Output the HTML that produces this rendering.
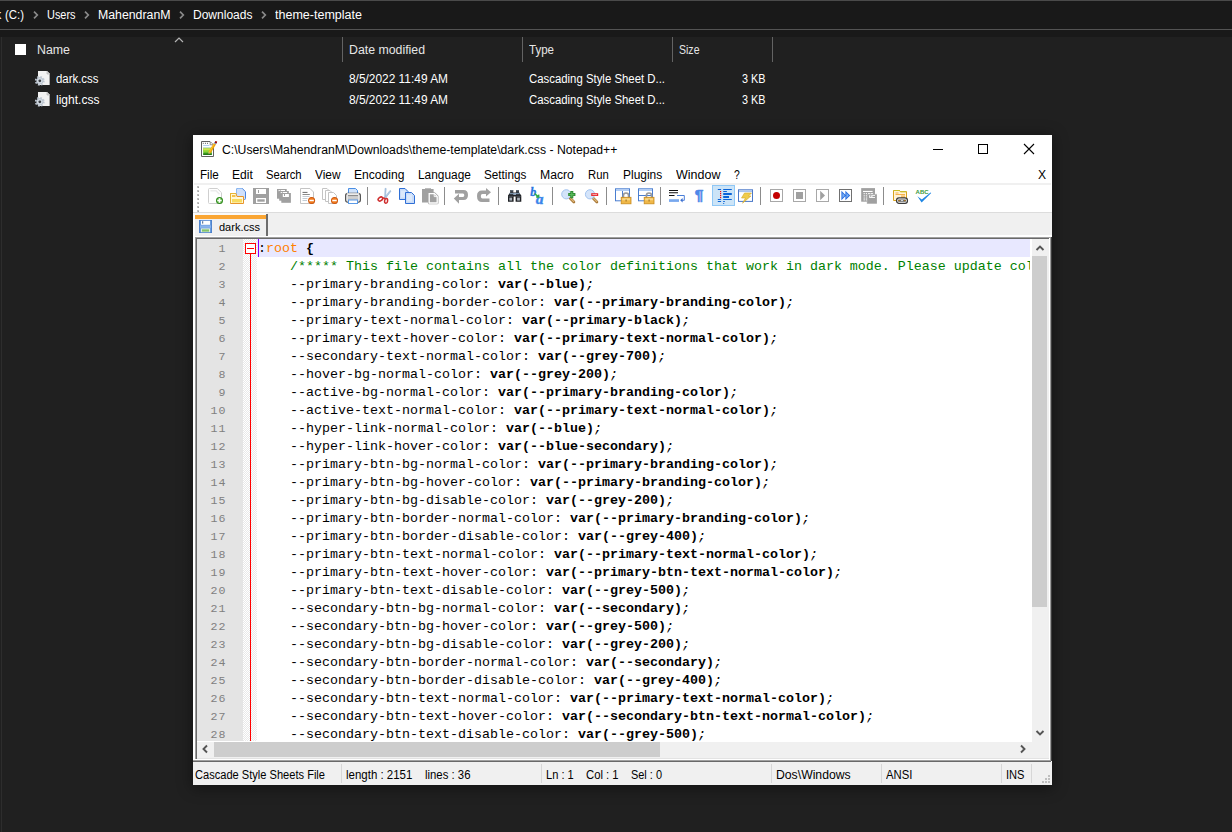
<!DOCTYPE html>
<html lang="en"><head><meta charset="utf-8"><title>dark.css - Notepad++</title>
<style>
html,body{margin:0;padding:0}
body{width:1232px;height:832px;background:#202020;position:relative;overflow:hidden;font-family:"Liberation Sans",sans-serif}
.a{position:absolute}
.t{position:absolute;white-space:pre;line-height:1;transform-origin:0 0}
svg{position:absolute;overflow:visible}
#win{position:absolute;left:193px;top:135px;width:859px;height:650px;background:#fff;box-shadow:0 2px 14px 1px rgba(0,0,0,.42)}
#ed{position:absolute;left:4px;top:104px;width:835px;height:503px;overflow:hidden;background:#fff;font-family:"Liberation Mono",monospace;font-size:13.333px}
#nummargin{position:absolute;left:0;top:0;width:46px;height:503px;background:#e4e4e4}
#foldmargin{position:absolute;left:46px;top:0;width:14px;height:503px;background-color:#fff;background-image:linear-gradient(45deg,#e9e9e9 25%,transparent 25%,transparent 75%,#e9e9e9 75%),linear-gradient(45deg,#e9e9e9 25%,transparent 25%,transparent 75%,#e9e9e9 75%);background-size:2px 2px;background-position:0 0,1px 1px}
#curline{position:absolute;left:60px;top:0;width:773px;height:18px;background:#e8e8ff}
#caret{position:absolute;left:61px;top:0;width:1px;height:18px;background:#8000ff}
.ln{position:absolute;left:0;width:1200px;height:18px;line-height:18px;white-space:pre;color:#000}
.n{position:absolute;top:1px;left:0;width:29.5px;text-align:right;color:#808080;font-size:11.6px;letter-spacing:1.04px}
.x{position:absolute;top:1px}
.x b{font-weight:bold}
.x i{font-style:italic;font-weight:normal}
.c{color:#008000}
.o{color:#ff8000}
.p{color:#000}
#tx{position:absolute;left:0;top:0;width:833px;height:503px;overflow:hidden}

</style></head><body>
<!-- Explorer -->
<div class="a" style="left:0;top:0;width:1232px;height:37px;background:#191919"></div>
<div class="a" style="left:0;top:0;width:1232px;height:1px;background:#4a4a4a"></div>
<div class="a" style="left:0;top:29px;width:1232px;height:1px;background:#535353"></div>
<div class="a" style="left:1px;top:37px;width:1px;height:795px;background:#2d2d2d"></div>
<svg style="left:32.7px;top:11.3px" width="6" height="8" viewBox="0 0 6 8"><path d="M1 0.7 L4.3 4 L1 7.3" fill="none" stroke="#8a8a8a" stroke-width="1.7"/></svg>
<svg style="left:83.7px;top:11.3px" width="6" height="8" viewBox="0 0 6 8"><path d="M1 0.7 L4.3 4 L1 7.3" fill="none" stroke="#8a8a8a" stroke-width="1.7"/></svg>
<svg style="left:178.7px;top:11.3px" width="6" height="8" viewBox="0 0 6 8"><path d="M1 0.7 L4.3 4 L1 7.3" fill="none" stroke="#8a8a8a" stroke-width="1.7"/></svg>
<svg style="left:260.7px;top:11.3px" width="6" height="8" viewBox="0 0 6 8"><path d="M1 0.7 L4.3 4 L1 7.3" fill="none" stroke="#8a8a8a" stroke-width="1.7"/></svg>
<div class="a" style="left:15px;top:44px;width:11px;height:11px;background:#fff;"></div>
<svg style="left:173.6px;top:36.5px" width="10" height="6" viewBox="0 0 10 6"><path d="M1 5 L5 1 L9 5" fill="none" stroke="#b4b4b4" stroke-width="1.2"/></svg>
<div class="a" style="left:342px;top:37px;width:1px;height:25px;background:#636363;"></div>
<div class="a" style="left:522px;top:37px;width:1px;height:25px;background:#636363;"></div>
<div class="a" style="left:672px;top:37px;width:1px;height:25px;background:#636363;"></div>
<div class="a" style="left:772px;top:37px;width:1px;height:25px;background:#636363;"></div>
<svg style="left:35px;top:70px" width="16" height="16" viewBox="0 0 16 16" ><path d="M3 1 H12 L15 4 V15 H3 Z" fill="#f2f2f2"/><path d="M14.5 4 V15" stroke="#a8a8a8" stroke-width="1"/><path d="M12 1 V4 H15" fill="#d8d8d8" stroke="#a8a8a8" stroke-width="0.6"/><circle cx="4.8" cy="10.8" r="4.1" fill="none" stroke="#c4ccd6" stroke-width="1.7" stroke-dasharray="1.7 1.52"/><circle cx="4.8" cy="10.8" r="3.3" fill="#d4dce4" stroke="#9aa6b4" stroke-width="0.5"/><circle cx="4.8" cy="10.8" r="1.4" fill="#3c4046"/></svg>
<svg style="left:35px;top:91px" width="16" height="16" viewBox="0 0 16 16" ><path d="M3 1 H12 L15 4 V15 H3 Z" fill="#f2f2f2"/><path d="M14.5 4 V15" stroke="#a8a8a8" stroke-width="1"/><path d="M12 1 V4 H15" fill="#d8d8d8" stroke="#a8a8a8" stroke-width="0.6"/><circle cx="4.8" cy="10.8" r="4.1" fill="none" stroke="#c4ccd6" stroke-width="1.7" stroke-dasharray="1.7 1.52"/><circle cx="4.8" cy="10.8" r="3.3" fill="#d4dce4" stroke="#9aa6b4" stroke-width="0.5"/><circle cx="4.8" cy="10.8" r="1.4" fill="#3c4046"/></svg>

<!-- Notepad++ window -->
<div id="win">
<svg style="left:8px;top:6px" width="16" height="16" viewBox="0 0 16 16" ><path d="M0.5 0.5 H9 L12.5 4 V15.5 H0.5 Z" fill="#fff" stroke="#606060"/><path d="M9.2 1 V3.8 H12" fill="#fff" stroke="#707070" stroke-width="0.8"/><path d="M1.8 2.4 H7.6" stroke="#707070" stroke-width="1.1" stroke-dasharray="0.9 1.25"/><path d="M2.2 4.5 H8.4" stroke="#a8c8ec" stroke-width="0.9"/><rect x="2.2" y="6.3" width="8.6" height="7.5" fill="#68c030"/><rect x="2.2" y="6.3" width="8.6" height="1" fill="#dce8f8"/><rect x="2.2" y="7.3" width="8.6" height="1.8" fill="#d0e44c"/><rect x="2.2" y="9.1" width="8.6" height="1.6" fill="#a0dc3c"/><rect x="2.2" y="12.5" width="8.6" height="1.3" fill="#0c6408"/><path d="M13.9 2.6 L8.6 11.6" stroke="#f0a008" stroke-width="2.5"/><path d="M13.4 2.6 L8.3 11.2" stroke="#fcc830" stroke-width="0.9"/><path d="M9.6 12.2 L7.4 13.2 L7.6 10.9 Z" fill="#e8c890"/><path d="M7.4 13.2 L8 12 L8.5 12.7 Z" fill="#4a3a1a"/><path d="M14.6 1.4 L13.7 2.9" stroke="#88a8d8" stroke-width="2.3"/><rect x="14" y="0.3" width="2" height="2" fill="#9c0808" transform="rotate(12 15 1.3)"/></svg>
<div class="a" style="left:740px;top:14px;width:10px;height:1px;background:#000;"></div>
<div class="a" style="left:785px;top:9px;width:8px;height:8px;border:1px solid #000"></div>
<svg style="left:831px;top:9px" width="10" height="10" viewBox="0 0 10 10"><path d="M0 0 L10 10 M10 0 L0 10" stroke="#000" stroke-width="1.1"/></svg>
<div class="a" style="left:1px;top:48px;width:857px;height:2px;background:#f0f0f0;"></div>
<div class="a" style="left:4px;top:51px;width:2px;height:2px;background:#c2c2c2;"></div><div class="a" style="left:5px;top:52px;width:1px;height:1px;background:#a2a2a2;"></div><div class="a" style="left:4px;top:55px;width:2px;height:2px;background:#c2c2c2;"></div><div class="a" style="left:5px;top:56px;width:1px;height:1px;background:#a2a2a2;"></div><div class="a" style="left:4px;top:59px;width:2px;height:2px;background:#c2c2c2;"></div><div class="a" style="left:5px;top:60px;width:1px;height:1px;background:#a2a2a2;"></div><div class="a" style="left:4px;top:63px;width:2px;height:2px;background:#c2c2c2;"></div><div class="a" style="left:5px;top:64px;width:1px;height:1px;background:#a2a2a2;"></div><div class="a" style="left:4px;top:67px;width:2px;height:2px;background:#c2c2c2;"></div><div class="a" style="left:5px;top:68px;width:1px;height:1px;background:#a2a2a2;"></div><div class="a" style="left:4px;top:71px;width:2px;height:2px;background:#c2c2c2;"></div><div class="a" style="left:5px;top:72px;width:1px;height:1px;background:#a2a2a2;"></div><div class="a" style="left:4px;top:75px;width:2px;height:2px;background:#c2c2c2;"></div><div class="a" style="left:5px;top:76px;width:1px;height:1px;background:#a2a2a2;"></div>
<div class="a" style="left:519px;top:50px;width:21px;height:19px;background:#cce4f7;border:1px solid #90c8f6"></div>
<div class="a" style="left:174px;top:52px;width:1px;height:18px;background:#8c8c8c"></div>
<div class="a" style="left:251px;top:52px;width:1px;height:18px;background:#8c8c8c"></div>
<div class="a" style="left:305px;top:52px;width:1px;height:18px;background:#8c8c8c"></div>
<div class="a" style="left:359px;top:52px;width:1px;height:18px;background:#8c8c8c"></div>
<div class="a" style="left:413px;top:52px;width:1px;height:18px;background:#8c8c8c"></div>
<div class="a" style="left:467px;top:52px;width:1px;height:18px;background:#8c8c8c"></div>
<div class="a" style="left:567px;top:52px;width:1px;height:18px;background:#8c8c8c"></div>
<div class="a" style="left:690px;top:52px;width:1px;height:18px;background:#8c8c8c"></div>
<svg style="left:14px;top:53px" width="16" height="16" viewBox="0 0 16 16" ><path d="M1.5 1.5 Q1.5 0.5 2.5 0.5 H10.3 L14.5 4.7 V14.5 Q14.5 15.5 13.5 15.5 H2.5 Q1.5 15.5 1.5 14.5 Z" fill="#fff" stroke="#cfcfcf"/><path d="M3.5 2.8 H9 L12.5 6.2" fill="none" stroke="#ececec" stroke-width="1.6"/><circle cx="12.5" cy="12.5" r="3.5" fill="#2f8a1d"/><circle cx="12.5" cy="12.5" r="2.6" fill="#56b03c"/><path d="M12.5 10.3 V14.7 M10.3 12.5 H14.7" stroke="#fff" stroke-width="1.7"/></svg>
<svg style="left:37px;top:53px" width="16" height="16" viewBox="0 0 16 16" ><path d="M6.5 1.5 Q6.5 0.5 7.5 0.5 H12.3 L15.5 3.7 V10.5 Q15.5 11.5 14.5 11.5 H6.5 Z" fill="#cfe0fb" stroke="#4a86e0"/><path d="M6.5 11 V1.5 Q6.5 0.5 7.5 0.5 H12" fill="none" stroke="#8fbaf2"/><path d="M0.5 5.5 H6 L7 8.5 H13.5 V15.5 H0.5 Z" fill="#fff8d8" stroke="#e8952a"/><path d="M0.5 15 V5.5 H6" fill="none" stroke="#e8b432"/><rect x="2" y="11" width="10" height="3.5" fill="#f8dc60"/><rect x="2" y="7" width="3.5" height="2" fill="#f4c24a"/></svg>
<svg style="left:60px;top:53px" width="16" height="16" viewBox="0 0 16 16" ><rect x="0" y="0" width="16" height="16" fill="#a0a0a0"/><rect x="3" y="1" width="10" height="5" fill="#fff"/><rect x="5" y="2" width="1" height="3" fill="#a0a0a0"/><rect x="3" y="10" width="10" height="5" fill="#fff"/><rect x="4.3" y="11.3" width="7.4" height="2.4" fill="#a0a0a0"/></svg>
<svg style="left:83px;top:53px" width="16" height="16" viewBox="0 0 16 16" ><rect x="1" y="1" width="9.7" height="9.7" fill="#a0a0a0"/><rect x="2.6" y="2" width="1.2" height="1.2" fill="#fff"/><rect x="4.6" y="2" width="4.4" height="1.2" fill="#fff"/><rect x="3.2" y="3" width="9.6" height="9.7" fill="#a0a0a0"/><rect x="4.7" y="4" width="1.2" height="1.2" fill="#fff"/><rect x="6.7" y="4" width="4.4" height="1.2" fill="#fff"/><rect x="5.3" y="5" width="9.6" height="9.8" fill="#a0a0a0"/><rect x="6.8" y="6" width="6.1" height="3" fill="#fff"/><rect x="8" y="6" width="1" height="2" fill="#a0a0a0"/></svg>
<svg style="left:106px;top:53px" width="16" height="16" viewBox="0 0 16 16" ><path d="M1.5 0.5 H11 L14.5 4 V15.5 H1.5 Z" fill="#fff" stroke="#c4c4c4"/><path d="M3.5 4.4 H8.5" stroke="#6a6a6a" stroke-width="1"/><path d="M3.5 6.5 H10.8" stroke="#8a8a8a" stroke-width="1"/><path d="M3.5 8.5 H10.5 M3.5 10.5 H8.5 M3.5 12.5 H8" stroke="#c4ccd4" stroke-width="1"/><circle cx="12.6" cy="12.5" r="3.5" fill="#c9500a"/><circle cx="12.6" cy="12.5" r="2.7" fill="#f07a1c"/><rect x="10.4" y="11.75" width="4.4" height="1.5" fill="#fff"/></svg>
<svg style="left:129px;top:53px" width="16" height="16" viewBox="0 0 16 16" ><path d="M0.5 0.5 H5 L7.5 3 V11.5 H0.5 Z" fill="#fff" stroke="#c4c4c4"/><path d="M3.5 2.5 H8 L10.5 5 V13.5 H3.5 Z" fill="#fff" stroke="#c4c4c4"/><path d="M6.5 4.5 H11.5 L14.5 7.5 V15.5 H6.5 Z" fill="#fff" stroke="#c4c4c4"/><circle cx="12.5" cy="12.5" r="3.5" fill="#c9500a"/><circle cx="12.5" cy="12.5" r="2.7" fill="#f07a1c"/><rect x="10.3" y="11.75" width="4.4" height="1.5" fill="#fff"/></svg>
<svg style="left:152px;top:53px" width="16" height="16" viewBox="0 0 16 16" ><path d="M3.5 6 V0.5 H10.5 L12.5 2.5 V6" fill="#cfe2fb" stroke="#4a8ee4"/><rect x="0.6" y="5.4" width="14.8" height="8.8" rx="2.2" fill="#e4e4e4" stroke="#4e4e4e" stroke-width="1.1"/><rect x="1.8" y="5.2" width="12.4" height="1.3" fill="#f4f4f4"/><rect x="3" y="7" width="10" height="1.2" fill="#8c8c8c"/><rect x="3" y="8.4" width="10" height="3.4" fill="#c4c4c4"/><rect x="3" y="9.4" width="10" height="1" fill="#d8d8d8"/><rect x="3.5" y="12" width="9" height="3.5" fill="#fff" stroke="#5a9ae8"/></svg>
<svg style="left:183px;top:53px" width="16" height="16" viewBox="0 0 16 16" ><path d="M9 0.3 L10.2 0.5 L9.5 10.8 L8.5 10.8 Z" fill="#b8d0e8" stroke="#7aa0c8" stroke-width="0.4"/><path d="M14 2.4 L15 3.2 L9.4 10.4 L8.6 9.4 Z" fill="#b8d0e8" stroke="#6a94c0" stroke-width="0.4"/><ellipse cx="4.4" cy="11" rx="2.5" ry="1.7" fill="none" stroke="#cf2f2f" stroke-width="1.5" transform="rotate(-35 4.4 11)"/><ellipse cx="10.1" cy="12.9" rx="1.5" ry="2.4" fill="none" stroke="#cf2f2f" stroke-width="1.5" transform="rotate(8 10.1 12.9)"/><path d="M6.4 9.8 L9 10.4" stroke="#cf2f2f" stroke-width="1.5"/></svg>
<svg style="left:206px;top:53px" width="16" height="16" viewBox="0 0 16 16" ><path d="M0.5 0.5 H6 L9 3.5 V11.5 H0.5 Z" fill="#c9dcf8" stroke="#2f6fd6" stroke-linejoin="round"/><rect x="2" y="2.5" width="4.5" height="7" fill="#dce9fb"/><path d="M6.5 4.5 H12.5 L15.5 7.5 V15.5 H6.5 Z" fill="#c9dcf8" stroke="#2f6fd6" stroke-linejoin="round"/><rect x="8" y="6.5" width="5" height="7" fill="#dce9fb"/></svg>
<svg style="left:229px;top:53px" width="16" height="16" viewBox="0 0 16 16" ><rect x="0" y="1" width="11.6" height="13.5" fill="#a0a0a0"/><rect x="3" y="0.3" width="6" height="2" fill="#a0a0a0"/><path d="M7.2 5.6 H12.4 L15.2 8.4 V15 H7.2 Z" fill="#a0a0a0" stroke="#a0a0a0" stroke-width="2.6" stroke-linejoin="round"/><path d="M7.2 5.6 H12.4 L15.2 8.4 V15 H7.2 Z" fill="#a0a0a0" stroke="#fff" stroke-width="1.3"/><path d="M12.2 5.8 V8.6 H15" fill="none" stroke="#fff" stroke-width="0.9"/></svg>
<svg style="left:260px;top:53px" width="16" height="16" viewBox="0 0 16 16" ><path d="M2 2 H10.5 Q15 2 15 7 Q15 12 10.5 12 H6 V15.8 L0.8 10.5 L6 5.8 V9 H10 Q11.3 9 11.3 7.2 Q11.3 5.5 10 5.5 H2 Z" fill="#a0a0a0"/></svg>
<svg style="left:283px;top:53px" width="16" height="16" viewBox="0 0 16 16" ><path d="M15 4.2 L10 0 V2.5 H6 Q1 2.5 1 8 Q1 14 6 14 H13.5 V10.5 H6.5 Q4.8 10.5 4.8 8 Q4.8 6 6.5 6 H10 V8.5 Z" fill="#a0a0a0"/></svg>
<svg style="left:314px;top:53px" width="16" height="16" viewBox="0 0 16 16" ><path d="M3.2 2 H6.2 V4.4 H9 V2 H12 V4.6 L14.3 7.4 V13.7 H8.6 V8.4 H6.6 V13.7 H1 V7.4 L3.2 4.6 Z" fill="#1e2024"/><path d="M3.2 2 H6.2 V3.6 H3.2 Z M9 2 H12 V3.6 H9 Z" fill="#5a6672"/><path d="M2.6 5.6 L6.4 5.6 M8.9 5.6 L12.7 5.6" stroke="#7890a8" stroke-width="1.5"/><path d="M6.2 5 H9 V7 H6.2 Z" fill="#8aa0b8"/><rect x="2.3" y="9.6" width="2.8" height="3" fill="#a8b0b8"/><rect x="10.1" y="9.6" width="2.8" height="3" fill="#a8b0b8"/><path d="M1.6 8.3 H6 M9.2 8.3 H13.7" stroke="#4a525a" stroke-width="1"/></svg>
<svg style="left:337px;top:53px" width="16" height="16" viewBox="0 0 16 16" ><text x="0.2" y="7.8" font-family="Liberation Serif,serif" font-size="12" font-weight="bold" font-style="italic" fill="#2a74e0" stroke="#2a74e0" stroke-width="0.3">b</text><text x="5.8" y="15.6" font-family="Liberation Serif,serif" font-size="15.5" font-weight="bold" font-style="italic" fill="#3a86ea" stroke="#3a86ea" stroke-width="0.4">a</text><path d="M4.6 5.6 L8.6 9 M8.8 9.2 L8.6 6.6 M8.8 9.2 L6.2 9" stroke="#2fa84a" stroke-width="1.5" fill="none"/></svg>
<svg style="left:368px;top:53px" width="16" height="16" viewBox="0 0 16 16" ><path d="M9 10 L12.9 13.9" stroke="#a87838" stroke-width="2.8" stroke-linecap="round"/><path d="M9.5 10.3 L12.7 13.5" stroke="#e0b878" stroke-width="1.1" stroke-linecap="round"/><circle cx="5.3" cy="6.3" r="4.6" fill="#d4e4fa" stroke="#a4c4f0"/><path d="M10.8 3 V10.2 M7.2 6.6 H14.4" stroke="#2e8b32" stroke-width="3"/><path d="M10.8 4 V9.2 M8.2 6.6 H13.4" stroke="#58b85a" stroke-width="1.2"/></svg>
<svg style="left:391px;top:53px" width="16" height="16" viewBox="0 0 16 16" ><path d="M9 10 L12.9 13.9" stroke="#a87838" stroke-width="2.8" stroke-linecap="round"/><path d="M9.5 10.3 L12.7 13.5" stroke="#e0b878" stroke-width="1.1" stroke-linecap="round"/><circle cx="6" cy="6.3" r="4.6" fill="#d4e4fa" stroke="#a4c4f0"/><rect x="7.2" y="5.2" width="7" height="2.8" fill="#e8262c"/><rect x="8.4" y="6.1" width="4.6" height="1" fill="#f8b0b0"/></svg>
<svg style="left:422px;top:53px" width="16" height="16" viewBox="0 0 16 16" ><rect x="0.5" y="0.8" width="14" height="12" fill="#fff" stroke="#4a7ed0"/><rect x="1" y="1.3" width="13" height="1.6" fill="#a8c8f4"/><path d="M7.5 3 V12.5" stroke="#4a7ed0"/><path d="M8.4 10 V7.6 Q8.4 5 11 5 Q13.6 5 13.6 7.6 V10" fill="none" stroke="#9a9a9a" stroke-width="1.7"/><rect x="6.2" y="9.3" width="9.8" height="6.5" fill="#f0b848" stroke="#c88a1c" stroke-width="0.8"/><rect x="7.2" y="10.3" width="7.8" height="2" fill="#f8d888"/><rect x="10.5" y="11.5" width="1.2" height="2" fill="#a87820"/></svg>
<svg style="left:445px;top:53px" width="16" height="16" viewBox="0 0 16 16" ><rect x="0.5" y="0.8" width="14" height="12" fill="#fff" stroke="#4a7ed0"/><rect x="1" y="1.3" width="13" height="1.6" fill="#a8c8f4"/><path d="M0.5 7.5 H14.5" stroke="#4a7ed0"/><path d="M8.4 10 V7.6 Q8.4 5 11 5 Q13.6 5 13.6 7.6 V10" fill="none" stroke="#9a9a9a" stroke-width="1.7"/><rect x="6.2" y="9.3" width="9.8" height="6.5" fill="#f0b848" stroke="#c88a1c" stroke-width="0.8"/><rect x="7.2" y="10.3" width="7.8" height="2" fill="#f8d888"/><rect x="10.5" y="11.5" width="1.2" height="2" fill="#a87820"/></svg>
<svg style="left:476px;top:53px" width="16" height="16" viewBox="0 0 16 16" ><path d="M0 2.5 H9 M0 4.7 H9 M0 7.5 H5.5" stroke="#111" stroke-width="1.1"/><path d="M8 7.5 H15.3 V12.3 H12.5" fill="none" stroke="#4a7ed8" stroke-width="1"/><path d="M13.6 10 L11.2 12.3 L13.6 14.6 Z" fill="#3a6ed0"/><rect x="0" y="11.2" width="10" height="2.7" fill="#78a8ee"/></svg>
<svg style="left:499px;top:53px" width="16" height="16" viewBox="0 0 16 16" ><text x="2.7" y="11.6" font-family="Liberation Sans,sans-serif" font-size="14.2" font-weight="bold" fill="#4f88e8" stroke="#4f88e8" stroke-width="0.55" textLength="8.6" lengthAdjust="spacingAndGlyphs">&#182;</text></svg>
<svg style="left:522px;top:53px" width="16" height="16" viewBox="0 0 16 16" ><rect x="2.8" y="1" width="3.3" height="1" fill="#0a64d8"/><rect x="8.2" y="1" width="8.6" height="1" fill="#0a64d8"/><rect x="8.2" y="3" width="3.7" height="1" fill="#0a64d8"/><rect x="8.2" y="5" width="8.6" height="2" fill="#0a64d8"/><rect x="8.2" y="8" width="5.8" height="2" fill="#0a64d8"/><rect x="2.8" y="11" width="3.3" height="1" fill="#0a64d8"/><rect x="8.2" y="11" width="8.6" height="1" fill="#0a64d8"/><rect x="2.8" y="13" width="3.3" height="1" fill="#0a64d8"/><rect x="8.2" y="13" width="1.6" height="1" fill="#0a64d8"/><rect x="8.2" y="15" width="1" height="1" fill="#0a64d8"/><rect x="5" y="3" width="1.2" height="1.2" fill="#f01010"/><rect x="5" y="5" width="1.2" height="1.2" fill="#f01010"/><rect x="5" y="7" width="1.2" height="1.2" fill="#f01010"/><rect x="5" y="9" width="1.2" height="1.2" fill="#f01010"/></svg>
<svg style="left:545px;top:53px" width="16" height="16" viewBox="0 0 16 16" ><rect x="0.5" y="1.8" width="14" height="11.6" fill="#fff" stroke="#4a78c8"/><rect x="1" y="2.3" width="13" height="1.8" fill="#a8c4f0"/><path d="M6.5 5 H13.5 L10.5 8 H13 L4.5 15.2 L7.5 10 H3.5 Z" fill="#f0cc4c" stroke="#d4a828" stroke-width="0.6"/></svg>
<svg style="left:576px;top:53px" width="16" height="16" viewBox="0 0 16 16" ><rect x="1.5" y="1.5" width="12" height="12" fill="#fff" stroke="#a8a8a8"/><circle cx="7.5" cy="7.5" r="3.5" fill="#c40000"/></svg>
<svg style="left:599px;top:53px" width="16" height="16" viewBox="0 0 16 16" ><rect x="1.5" y="1.5" width="12" height="12" fill="#fff" stroke="#a8a8a8"/><rect x="4" y="4" width="7" height="7" fill="#a0a0a0"/></svg>
<svg style="left:622px;top:53px" width="16" height="16" viewBox="0 0 16 16" ><rect x="1.5" y="1.5" width="12" height="12" fill="#fff" stroke="#a8a8a8"/><path d="M5.2 2.8 V12.2 L10 7.5 Z" fill="#a0a0a0"/></svg>
<svg style="left:645px;top:53px" width="16" height="16" viewBox="0 0 16 16" ><rect x="1.5" y="1.5" width="12" height="12" fill="#fff" stroke="#707070"/><path d="M3.4 2.8 V12.2 L8 7.5 Z M7.4 2.8 V12.2 L12.2 7.5 Z" fill="#2a6ee0"/><path d="M4.4 5 V10 L6.8 7.5 Z M8.4 5 V10 L10.8 7.5 Z" fill="#7ab0f4"/></svg>
<svg style="left:668px;top:53px" width="16" height="16" viewBox="0 0 16 16" ><rect x="0.2" y="0.1" width="13.8" height="13.6" fill="#a0a0a0"/><rect x="2" y="2.9" width="9.6" height="1.1" fill="#fff"/><rect x="2.6" y="5.1" width="1.2" height="1.1" fill="#fff"/><rect x="4.8" y="5.1" width="1.2" height="1.1" fill="#fff"/><rect x="2.6" y="7.3" width="1.2" height="1.1" fill="#fff"/><rect x="4.8" y="7.3" width="1.2" height="1.1" fill="#fff"/><rect x="2.6" y="9.5" width="1.2" height="1.1" fill="#fff"/><rect x="4.8" y="9.5" width="1.2" height="1.1" fill="#fff"/><rect x="2.6" y="11.3" width="1.2" height="1.1" fill="#fff"/><rect x="4.8" y="11.3" width="1.2" height="1.1" fill="#fff"/><rect x="7" y="5.1" width="2.4" height="1.1" fill="#fff"/><rect x="10" y="5.1" width="2" height="1.1" fill="#fff"/><rect x="6" y="6.2" width="9.9" height="9.5" fill="#a0a0a0"/><path d="M6 15.7 V6.2 H15.9" fill="none" stroke="#c8c8c8" stroke-width="0.5"/><rect x="8.2" y="7.2" width="5.8" height="2.7" fill="#fff"/><rect x="9.2" y="7.2" width="1.1" height="1.7" fill="#a0a0a0"/><rect x="11.4" y="8" width="2.6" height="1" fill="#a0a0a0"/></svg>
<svg style="left:699px;top:53px" width="16" height="16" viewBox="0 0 16 16" ><path d="M1.5 2.5 H7.5 L8.5 3.7 H14.5 V12.5 H1.5 Z" fill="#fff4d8" stroke="#d8a21e"/><path d="M1.5 2.5 H7.5 L8.5 3.7 H14.5" fill="none" stroke="#c8be28"/><path d="M3.5 5 H6.5 M3.5 6.5 H13 M9 8 H13 M9 9.2 H13" stroke="#f6b24a" stroke-width="1.1"/><rect x="4.6" y="9.9" width="10.8" height="5.4" rx="2.4" fill="#fff" stroke="#3a3a3a" stroke-width="1.3"/><rect x="6.2" y="11.6" width="7.6" height="2" fill="#2c2c2c"/><rect x="8.6" y="12.2" width="2.8" height="0.9" fill="#fff"/><rect x="6.6" y="12" width="1" height="1.2" fill="#f0a020"/><rect x="12.4" y="12" width="1" height="1.2" fill="#f0a020"/></svg>
<svg style="left:722px;top:53px" width="16" height="16" viewBox="0 0 16 16" ><text x="0.6" y="6.4" font-family="Liberation Sans,sans-serif" font-size="6.2" font-weight="bold" fill="#3a9a3a" textLength="13" lengthAdjust="spacingAndGlyphs">ABC</text><path d="M2.4 8.2 L6.6 14.6 L16.2 5 L15.6 4.6 L6.8 11.6 Z" fill="#1e86e4"/></svg>
<div class="a" style="left:0px;top:77px;width:859px;height:1px;background:#dcdcdc;"></div>
<div class="a" style="left:0px;top:78px;width:859px;height:22px;background:#f0f0f0;"></div>
<div class="a" style="left:0px;top:78px;width:2px;height:22px;background:#fff;"></div>
<div class="a" style="left:0px;top:100px;width:859px;height:2px;background:#fff;"></div>
<div class="a" style="left:2px;top:78px;width:72px;height:2px;background:#fafafa;"></div>
<div class="a" style="left:2px;top:80px;width:71px;height:21px;background:#f0f0f0;"></div>
<div class="a" style="left:2px;top:80px;width:71px;height:4px;background:#faa634;"></div>
<div class="a" style="left:73px;top:79px;width:2px;height:22px;background:#6d6d6d;"></div>
<svg style="left:6px;top:85px" width="13" height="13" viewBox="0 0 13 13" ><rect x="0" y="0" width="13" height="13" fill="#4a7ec8"/><rect x="0.8" y="0.8" width="11.4" height="11.4" fill="#6a9ee0"/><rect x="2" y="0.8" width="9" height="4" fill="#fff"/><rect x="3.2" y="1.2" width="1" height="2.4" fill="#3a5a8a"/><rect x="1" y="5.4" width="11" height="2.4" fill="#8ab4ec"/><rect x="2" y="8.4" width="9" height="3.8" fill="#dfeedd"/><rect x="3" y="9.4" width="7" height="2.2" fill="#84c46a"/></svg>
<div class="a" style="left:0px;top:102px;width:2px;height:523px;background:#fff;"></div>
<div class="a" style="left:2px;top:102px;width:855px;height:1px;background:#a0a0a0;"></div>
<div class="a" style="left:2px;top:103px;width:855px;height:1px;background:#696969;"></div>
<div class="a" style="left:2px;top:102px;width:1px;height:522px;background:#a0a0a0;"></div>
<div class="a" style="left:3px;top:103px;width:1px;height:521px;background:#696969;"></div>
<div class="a" style="left:855px;top:104px;width:1px;height:520px;background:#e3e3e3;"></div>
<div class="a" style="left:856px;top:103px;width:1px;height:521px;background:#fff;"></div>
<div class="a" style="left:857px;top:102px;width:1px;height:524px;background:#9a9a9a;"></div>
<div class="a" style="left:858px;top:102px;width:1px;height:524px;background:#3c3c3c;"></div>
<div id="ed">
<div id="curline"></div>
<div id="nummargin"></div>
<div id="foldmargin"></div>
<div id="caret"></div>
<div class="a" style="left:48px;top:4px;width:9px;height:9px;border:1px solid #ff0000;background:#fff"></div>
<div class="a" style="left:50px;top:9px;width:7px;height:1px;background:#ff0000;"></div>
<div class="a" style="left:53px;top:15px;width:1px;height:490px;background:#ff0000;"></div>
<div id="tx">
<div class="ln" style="top:0px"><span class="n">1</span><span class="x" style="left:61px"><span class="p">:</span><span class="o">root</span> <b>{</b></span></div>
<div class="ln" style="top:18px"><span class="n">2</span><span class="x" style="left:93px"><span class="c">/***** This file contains all the color definitions that work in dark mode. Please update colors</span></span></div>
<div class="ln" style="top:36px"><span class="n">3</span><span class="x" style="left:93px">--primary-branding-color: <b>var(--blue)</b><i>;</i></span></div>
<div class="ln" style="top:54px"><span class="n">4</span><span class="x" style="left:93px">--primary-branding-border-color: <b>var(--primary-branding-color)</b><i>;</i></span></div>
<div class="ln" style="top:72px"><span class="n">5</span><span class="x" style="left:93px">--primary-text-normal-color: <b>var(--primary-black)</b><i>;</i></span></div>
<div class="ln" style="top:90px"><span class="n">6</span><span class="x" style="left:93px">--primary-text-hover-color: <b>var(--primary-text-normal-color)</b><i>;</i></span></div>
<div class="ln" style="top:108px"><span class="n">7</span><span class="x" style="left:93px">--secondary-text-normal-color: <b>var(--grey-700)</b><i>;</i></span></div>
<div class="ln" style="top:126px"><span class="n">8</span><span class="x" style="left:93px">--hover-bg-normal-color: <b>var(--grey-200)</b><i>;</i></span></div>
<div class="ln" style="top:144px"><span class="n">9</span><span class="x" style="left:93px">--active-bg-normal-color: <b>var(--primary-branding-color)</b><i>;</i></span></div>
<div class="ln" style="top:162px"><span class="n">10</span><span class="x" style="left:93px">--active-text-normal-color: <b>var(--primary-text-normal-color)</b><i>;</i></span></div>
<div class="ln" style="top:180px"><span class="n">11</span><span class="x" style="left:93px">--hyper-link-normal-color: <b>var(--blue)</b><i>;</i></span></div>
<div class="ln" style="top:198px"><span class="n">12</span><span class="x" style="left:93px">--hyper-link-hover-color: <b>var(--blue-secondary)</b><i>;</i></span></div>
<div class="ln" style="top:216px"><span class="n">13</span><span class="x" style="left:93px">--primary-btn-bg-normal-color: <b>var(--primary-branding-color)</b><i>;</i></span></div>
<div class="ln" style="top:234px"><span class="n">14</span><span class="x" style="left:93px">--primary-btn-bg-hover-color: <b>var(--primary-branding-color)</b><i>;</i></span></div>
<div class="ln" style="top:252px"><span class="n">15</span><span class="x" style="left:93px">--primary-btn-bg-disable-color: <b>var(--grey-200)</b><i>;</i></span></div>
<div class="ln" style="top:270px"><span class="n">16</span><span class="x" style="left:93px">--primary-btn-border-normal-color: <b>var(--primary-branding-color)</b><i>;</i></span></div>
<div class="ln" style="top:288px"><span class="n">17</span><span class="x" style="left:93px">--primary-btn-border-disable-color: <b>var(--grey-400)</b><i>;</i></span></div>
<div class="ln" style="top:306px"><span class="n">18</span><span class="x" style="left:93px">--primary-btn-text-normal-color: <b>var(--primary-text-normal-color)</b><i>;</i></span></div>
<div class="ln" style="top:324px"><span class="n">19</span><span class="x" style="left:93px">--primary-btn-text-hover-color: <b>var(--primary-btn-text-normal-color)</b><i>;</i></span></div>
<div class="ln" style="top:342px"><span class="n">20</span><span class="x" style="left:93px">--primary-btn-text-disable-color: <b>var(--grey-500)</b><i>;</i></span></div>
<div class="ln" style="top:360px"><span class="n">21</span><span class="x" style="left:93px">--secondary-btn-bg-normal-color: <b>var(--secondary)</b><i>;</i></span></div>
<div class="ln" style="top:378px"><span class="n">22</span><span class="x" style="left:93px">--secondary-btn-bg-hover-color: <b>var(--grey-500)</b><i>;</i></span></div>
<div class="ln" style="top:396px"><span class="n">23</span><span class="x" style="left:93px">--secondary-btn-bg-disable-color: <b>var(--grey-200)</b><i>;</i></span></div>
<div class="ln" style="top:414px"><span class="n">24</span><span class="x" style="left:93px">--secondary-btn-border-normal-color: <b>var(--secondary)</b><i>;</i></span></div>
<div class="ln" style="top:432px"><span class="n">25</span><span class="x" style="left:93px">--secondary-btn-border-disable-color: <b>var(--grey-400)</b><i>;</i></span></div>
<div class="ln" style="top:450px"><span class="n">26</span><span class="x" style="left:93px">--secondary-btn-text-normal-color: <b>var(--primary-text-normal-color)</b><i>;</i></span></div>
<div class="ln" style="top:468px"><span class="n">27</span><span class="x" style="left:93px">--secondary-btn-text-hover-color: <b>var(--secondary-btn-text-normal-color)</b><i>;</i></span></div>
<div class="ln" style="top:486px"><span class="n">28</span><span class="x" style="left:93px">--secondary-btn-text-disable-color: <b>var(--grey-500)</b><i>;</i></span></div>
</div>
</div>
<div class="a" style="left:839px;top:104px;width:17px;height:503px;background:#f0f0f0;"></div>
<div class="a" style="left:839px;top:121px;width:15px;height:351px;background:#cdcdcd;"></div>
<svg style="left:843px;top:110px" width="8" height="6" viewBox="0 0 8 6"><path d="M0.5 5 L4 1.5 L7.5 5" fill="none" stroke="#555" stroke-width="1.9"/></svg>
<svg style="left:843px;top:595px" width="8" height="6" viewBox="0 0 8 6"><path d="M0.5 1 L4 4.5 L7.5 1" fill="none" stroke="#555" stroke-width="1.9"/></svg>
<div class="a" style="left:4px;top:606px;width:835px;height:1px;background:#fff;"></div>
<div class="a" style="left:4px;top:607px;width:852px;height:17px;background:#f0f0f0;"></div>
<div class="a" style="left:21px;top:607px;width:446px;height:15px;background:#cdcdcd;"></div>
<svg style="left:8.8px;top:610.4px" width="6" height="8" viewBox="0 0 6 8"><path d="M5 0.5 L1.5 4 L5 7.5" fill="none" stroke="#555" stroke-width="1.9"/></svg>
<svg style="left:827.3px;top:610.4px" width="6" height="8" viewBox="0 0 6 8"><path d="M1 0.5 L4.5 4 L1 7.5" fill="none" stroke="#555" stroke-width="1.9"/></svg>
<div class="a" style="left:4px;top:623px;width:852px;height:1px;background:#e3e3e3;"></div>
<div class="a" style="left:2px;top:624px;width:855px;height:1px;background:#fff;"></div>
<div class="a" style="left:0px;top:625px;width:857px;height:1px;background:#a0a0a0;"></div>
<div class="a" style="left:0px;top:626px;width:858px;height:1px;background:#696969;"></div><div class="a" style="left:0px;top:627px;width:859px;height:23px;background:#f0f0f0;"></div>
<div class="a" style="left:148px;top:629px;width:1px;height:19px;background:#d7d7d7;"></div>
<div class="a" style="left:348px;top:629px;width:1px;height:19px;background:#d7d7d7;"></div>
<div class="a" style="left:578px;top:629px;width:1px;height:19px;background:#d7d7d7;"></div>
<div class="a" style="left:688px;top:629px;width:1px;height:19px;background:#d7d7d7;"></div>
<div class="a" style="left:808px;top:629px;width:1px;height:19px;background:#d7d7d7;"></div>
<div class="a" style="left:838px;top:629px;width:1px;height:19px;background:#d7d7d7;"></div>
<div class="a" style="left:855px;top:640px;width:2px;height:2px;background:#bfbfbf;"></div><div class="a" style="left:852px;top:643px;width:2px;height:2px;background:#bfbfbf;"></div><div class="a" style="left:855px;top:643px;width:2px;height:2px;background:#bfbfbf;"></div><div class="a" style="left:849px;top:646px;width:2px;height:2px;background:#bfbfbf;"></div><div class="a" style="left:852px;top:646px;width:2px;height:2px;background:#bfbfbf;"></div><div class="a" style="left:855px;top:646px;width:2px;height:2px;background:#bfbfbf;"></div>
</div>
<span class="t" id="bc0" style="left:5.00px;top:8.84px;font-size:12px;color:#fff;transform:scaleX(0.9500);">(C:)</span>
<span class="t" id="bc0k" style="left:-4.70px;top:8.84px;font-size:12px;color:#fff;transform:scaleX(1.0000);">k</span>
<span class="t" id="bc1" style="left:47.00px;top:8.84px;font-size:12px;color:#fff;transform:scaleX(0.9093);">Users</span>
<span class="t" id="bc2" style="left:98.00px;top:8.84px;font-size:12px;color:#fff;transform:scaleX(1.0252);">MahendranM</span>
<span class="t" id="bc3" style="left:193.00px;top:8.84px;font-size:12px;color:#fff;transform:scaleX(1.0021);">Downloads</span>
<span class="t" id="bc4" style="left:274.50px;top:8.84px;font-size:12px;color:#fff;transform:scaleX(1.0435);">theme-template</span>
<span class="t" id="h0" style="left:37.00px;top:43.84px;font-size:12px;color:#e6e6e6;transform:scaleX(1.0307);">Name</span>
<span class="t" id="h1" style="left:348.50px;top:43.84px;font-size:12px;color:#e6e6e6;transform:scaleX(1.0264);">Date modified</span>
<span class="t" id="h2" style="left:529.00px;top:43.84px;font-size:12px;color:#e6e6e6;transform:scaleX(0.9610);">Type</span>
<span class="t" id="h3" style="left:679.00px;top:43.84px;font-size:12px;color:#e6e6e6;transform:scaleX(0.8782);">Size</span>
<span class="t" id="f0" style="left:56.00px;top:73.34px;font-size:12px;color:#fff;transform:scaleX(0.9510);">dark.css</span>
<span class="t" id="f1" style="left:56.00px;top:94.34px;font-size:12px;color:#fff;transform:scaleX(1.0032);">light.css</span>
<span class="t" id="d0" style="left:348.50px;top:73.34px;font-size:12px;color:#fff;transform:scaleX(0.9914);">8/5/2022 11:49 AM</span>
<span class="t" id="d1" style="left:348.50px;top:94.34px;font-size:12px;color:#fff;transform:scaleX(0.9914);">8/5/2022 11:49 AM</span>
<span class="t" id="ty0" style="left:529.00px;top:73.34px;font-size:12px;color:#fff;transform:scaleX(0.9483);">Cascading Style Sheet D...</span>
<span class="t" id="ty1" style="left:529.00px;top:94.34px;font-size:12px;color:#fff;transform:scaleX(0.9483);">Cascading Style Sheet D...</span>
<span class="t" id="s0" style="left:741.50px;top:73.34px;font-size:12px;color:#fff;transform:scaleX(0.9033);">3 KB</span>
<span class="t" id="s1" style="left:741.50px;top:94.34px;font-size:12px;color:#fff;transform:scaleX(0.9033);">3 KB</span>
<span class="t" id="title" style="left:221.90px;top:143.84px;font-size:12px;color:#000;transform:scaleX(1.0186);">C:\Users\MahendranM\Downloads\theme-template\dark.css - Notepad++</span>
<span class="t" id="m0" style="left:199.80px;top:168.54px;font-size:12px;color:#000;transform:scaleX(0.9719);">File</span>
<span class="t" id="m1" style="left:231.90px;top:168.54px;font-size:12px;color:#000;transform:scaleX(1.0054);">Edit</span>
<span class="t" id="m2" style="left:265.50px;top:168.54px;font-size:12px;color:#000;transform:scaleX(0.9361);">Search</span>
<span class="t" id="m3" style="left:314.70px;top:168.54px;font-size:12px;color:#000;transform:scaleX(0.9924);">View</span>
<span class="t" id="m4" style="left:353.70px;top:168.54px;font-size:12px;color:#000;transform:scaleX(1.0071);">Encoding</span>
<span class="t" id="m5" style="left:417.70px;top:168.54px;font-size:12px;color:#000;transform:scaleX(0.9908);">Language</span>
<span class="t" id="m6" style="left:483.60px;top:168.54px;font-size:12px;color:#000;transform:scaleX(0.9779);">Settings</span>
<span class="t" id="m7" style="left:540.10px;top:168.54px;font-size:12px;color:#000;transform:scaleX(1.0167);">Macro</span>
<span class="t" id="m8" style="left:588.10px;top:168.54px;font-size:12px;color:#000;transform:scaleX(0.9402);">Run</span>
<span class="t" id="m9" style="left:622.90px;top:168.54px;font-size:12px;color:#000;transform:scaleX(0.9960);">Plugins</span>
<span class="t" id="m10" style="left:675.70px;top:168.54px;font-size:12px;color:#000;transform:scaleX(1.0401);">Window</span>
<span class="t" id="m11" style="left:733.70px;top:168.54px;font-size:12px;color:#000;transform:scaleX(0.8673);">?</span>
<span class="t" id="m12" style="left:1037.50px;top:168.54px;font-size:12px;color:#000;transform:scaleX(1.0105);">X</span>
<span class="t" id="tab" style="left:219.10px;top:221.69px;font-size:11px;color:#000;transform:scaleX(1.0008);">dark.css</span>
<span class="t" id="st0" style="left:195.10px;top:768.54px;font-size:12px;color:#000;transform:scaleX(0.9236);">Cascade Style Sheets File</span>
<span class="t" id="st1" style="left:346.10px;top:768.54px;font-size:12px;color:#000;transform:scaleX(0.9567);">length : 2151</span>
<span class="t" id="st1b" style="left:425.00px;top:768.54px;font-size:12px;color:#000;transform:scaleX(0.9473);">lines : 36</span>
<span class="t" id="st2" style="left:546.00px;top:768.54px;font-size:12px;color:#000;transform:scaleX(0.9257);">Ln : 1</span>
<span class="t" id="st2b" style="left:586.20px;top:768.54px;font-size:12px;color:#000;transform:scaleX(0.9398);">Col : 1</span>
<span class="t" id="st2c" style="left:630.70px;top:768.54px;font-size:12px;color:#000;transform:scaleX(0.9109);">Sel : 0</span>
<span class="t" id="st3" style="left:775.90px;top:768.54px;font-size:12px;color:#000;transform:scaleX(1.0183);">Dos\Windows</span>
<span class="t" id="st4" style="left:885.60px;top:768.54px;font-size:12px;color:#000;transform:scaleX(0.9423);">ANSI</span>
<span class="t" id="st5" style="left:1005.90px;top:768.54px;font-size:12px;color:#000;transform:scaleX(0.9243);">INS</span>
</body></html>
